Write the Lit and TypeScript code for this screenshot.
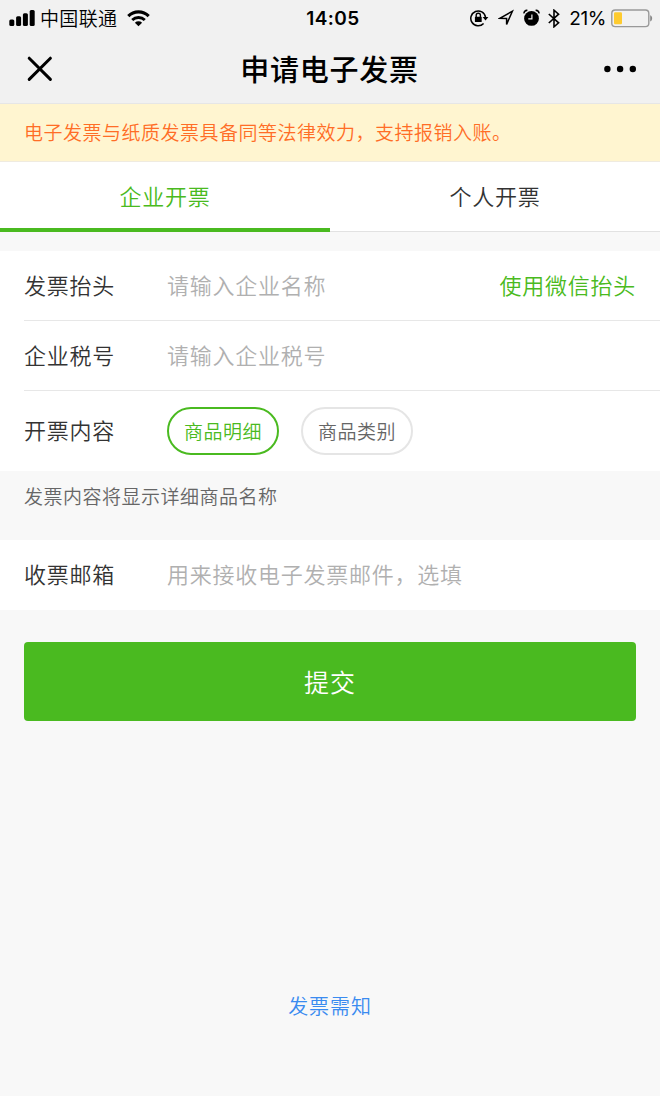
import { LitElement, html, css } from "lit";
import { customElement, state, property } from "lit/decorators.js";
import { classMap } from "lit/directives/class-map.js";

const GREEN = css`#4aba20`;

@customElement("status-bar")
class StatusBar extends LitElement {
  static styles = css`
    :host { display: flex; height: 36px; padding: 0 7px 0 9px; justify-content: space-between; color: #000; font-size: 19px; }
    .side { display: flex; align-items: center; flex: 1; height: 36px; }
    .right { justify-content: flex-end; }
    svg { display: block; flex: none; }
    .carrier { margin: 0 10px 0 5px; letter-spacing: 0.35px; line-height: 36px; }
    .time { font-family: Inter, "Liberation Sans", sans-serif; font-weight: 600; font-size: 19px; line-height: 38px; letter-spacing: 0.45px; margin: 0 -2px 0 2px; }
    .pct { font-family: Inter, "Liberation Sans", sans-serif; font-weight: 400; font-size: 19px; letter-spacing: -0.4px; line-height: 36px; padding-top: 2px; margin: 0 5px 0 9px; }
    .lock { margin-right: 9px; }
    .loc { margin-right: 9px; }
    .alarm { margin-right: 8px; }
  `;
  render() {
    return html`
      <div class="side">
        <svg width="26" height="18" viewBox="0 0 26 18">
          <rect x="0.3" y="10.6" width="5" height="6.4" rx="1.5" />
          <rect x="7.1" y="7.2" width="5" height="9.8" rx="1.5" />
          <rect x="13.9" y="4.2" width="5" height="12.8" rx="1.5" />
          <rect x="20.7" y="1" width="5" height="16" rx="1.5" />
        </svg>
        <span class="carrier">中国联通</span>
        <svg width="23" height="17" viewBox="0 0 23 17" fill="none" stroke="#000" stroke-width="3.1">
          <path d="M1.3 6.1a14.4 14.4 0 0 1 20.4 0" />
          <path d="M5.2 10.1a8.9 8.9 0 0 1 12.6 0" stroke-width="2.8" />
          <path d="M11.5 16.2 7.9 12.7a5.1 5.1 0 0 1 7.2 0z" fill="#000" stroke="none" />
        </svg>
      </div>
      <span class="time">14:05</span>
      <div class="side right">
        <svg class="lock" width="19" height="18" viewBox="0 0 19 18">
          <path d="M13.6 14.4A7.4 7.4 0 1 1 15.5 8.2" fill="none" stroke="#000" stroke-width="1.5" />
          <path d="M12.6 8h5.8L15.5 11.4z" />
          <rect x="4.9" y="7.8" width="6.8" height="5.2" rx="0.6" />
          <path d="M6.2 8V6.3a2.1 2.1 0 0 1 4.2 0V8" fill="none" stroke="#000" stroke-width="1.4" />
        </svg>
        <svg class="loc" width="16" height="18" viewBox="0 0 16 18">
          <path d="M14.4 2.2 8.6 15.4V9.4L1.8 9.3z" fill="none" stroke="#000" stroke-width="1.5" />
        </svg>
        <svg class="alarm" width="17" height="18" viewBox="0 0 17 18">
          <circle cx="8.5" cy="9.4" r="7.4" />
          <path d="M1.1 4.4A2.6 2.6 0 0 1 4.4 1.5M15.9 4.4a2.6 2.6 0 0 0-3.3-2.9" fill="none" stroke="#000" stroke-width="1.7" />
          <path d="M8.9 5.4v4.5H5.3" fill="none" stroke="#f1f1f1" stroke-width="1.2" />
        </svg>
        <svg width="12" height="19" viewBox="0 0 12 19">
          <path d="m0.8 5 9.8 8.8L6 17.8V1.2l4.6 4L0.8 14" fill="none" stroke="#000" stroke-width="1.6" />
        </svg>
        <span class="pct">21%</span>
        <svg width="42" height="19" viewBox="0 0 42 19">
          <rect x="0.8" y="1" width="37" height="16.6" rx="3.4" fill="none" stroke="#999" stroke-width="1.4" />
          <rect x="3" y="3.3" width="8" height="12" rx="1.2" fill="#fecb2f" />
          <path d="M39.2 6.2c2.6.8 2.6 5.4 0 6.2z" fill="#888" />
        </svg>
      </div>
    `;
  }
}

@customElement("form-row")
class FormRow extends LitElement {
  @property() label = "";
  static styles = css`
    :host { display: flex; align-items: center; box-sizing: border-box; height: 70px; margin-left: 24px; padding-right: 24px; font-size: 22px; letter-spacing: 0.75px; }
    :host([divided]) { border-bottom: 1px solid #e7e7e7; }
    :host([tall]) { height: 80px; }
    .label { width: 143px; padding-bottom: 4px; color: #333; }
    :host([divided]) .label { padding-bottom: 3px; }
    .body { flex: 1; display: flex; align-items: center; }
  `;
  render() {
    return html`<span class="label">${this.label}</span><div class="body"><slot></slot></div>`;
  }
}

@customElement("app-root")
class AppRoot extends LitElement {
  @state() tab = 0;
  @state() kind = 0;

  static styles = css`
    :host { display: flex; flex-direction: column; height: 1096px; background: #f8f8f8; overflow: hidden;
      font-family: "Noto Sans CJK SC", sans-serif; font-weight: 350; }
    header { height: 103px; background: #f1f1f1; border-bottom: 1px solid #e6e6e6; }
    .nav { display: flex; align-items: center; justify-content: space-between; height: 66px; padding: 0 23px 0 27px; }
    .nav svg { display: block; }
    .side { width: 60px; display: flex; }
    .end { justify-content: flex-end; }
    h1 { margin: 0 5px 1px 0; font-size: 29px; line-height: 63px; font-weight: 500; letter-spacing: 0.75px; color: #000; }
    .notice { height: 57px; line-height: 55px; padding-left: 24px; background: #fff5d0; color: #ff6d26; font-size: 19px; letter-spacing: 0.5px; border-bottom: 1px solid #efebe0; }
    .tabs { display: flex; height: 70px; background: #fff; }
    .tab { flex: 1; box-sizing: border-box; height: 70px; line-height: 67px; text-align: center; font-size: 22px; letter-spacing: 0.75px; color: #333; border-bottom: 1px solid #e2e2e2; }
    .tab.on { color: ${GREEN}; border-bottom: 4px solid ${GREEN}; }
    .group { background: #fff; }
    .first { margin-top: 19px; }
    .hint { color: #b0b0b0; flex: 1; padding-bottom: 3px; }
    .mail .hint { padding-bottom: 4px; }
    .wx { color: ${GREEN}; padding-bottom: 3px; }
    .pill { box-sizing: border-box; width: 112px; height: 48px; line-height: 43px; border: 2px solid #e5e5e5; border-radius: 24px; text-align: center; font-size: 19px; letter-spacing: 0.5px; color: #666; margin-right: 22px; }
    .pill.on { color: ${GREEN}; border-color: ${GREEN}; }
    .note { height: 69px; line-height: 50px; padding-left: 24px; font-size: 19px; letter-spacing: 0.5px; color: #666; }
    .submit { margin: 32px 24px 0; height: 79px; line-height: 79px; border-radius: 4px; background: ${GREEN}; color: #fff; text-align: center; font-size: 25px; letter-spacing: 1px; }
    .link { margin-top: 270px; line-height: 30px; text-align: center; color: #3a8bf0; font-size: 20px; letter-spacing: 0.9px; }
  `;

  render() {
    return html`
      <header>
        <status-bar></status-bar>
        <div class="nav">
          <div class="side">
            <svg width="26" height="26" viewBox="0 0 26 26" stroke="#000" stroke-width="3" stroke-linecap="round">
              <path d="M2.2 2.2 23.4 23.4M23.4 2.2 2.2 23.4" />
            </svg>
          </div>
          <h1>申请电子发票</h1>
          <div class="side end">
            <svg width="34" height="8" viewBox="0 0 34 8">
              <circle cx="4.4" cy="4" r="3.2" /><circle cx="17.1" cy="4" r="3.2" /><circle cx="29.8" cy="4" r="3.2" />
            </svg>
          </div>
        </div>
      </header>
      <div class="notice">电子发票与纸质发票具备同等法律效力，支持报销入账。</div>
      <div class="tabs">
        ${["企业开票", "个人开票"].map((t, i) => html`
          <div class=${classMap({ tab: true, on: this.tab === i })} @click=${() => (this.tab = i)}>${t}</div>`)}
      </div>
      <div class="group first">
        <form-row label="发票抬头" divided><span class="hint">请输入企业名称</span><span class="wx">使用微信抬头</span></form-row>
        <form-row label="企业税号" divided><span class="hint">请输入企业税号</span></form-row>
        <form-row label="开票内容" tall>
          ${["商品明细", "商品类别"].map((t, i) => html`<span class=${classMap({ pill: true, on: this.kind === i })} @click=${() => (this.kind = i)}>${t}</span>`)}
        </form-row>
      </div>
      <div class="note">发票内容将显示详细商品名称</div>
      <div class="group mail">
        <form-row label="收票邮箱"><span class="hint">用来接收电子发票邮件，选填</span></form-row>
      </div>
      <div class="submit">提交</div>
      <div class="link">发票需知</div>
    `;
  }
}
